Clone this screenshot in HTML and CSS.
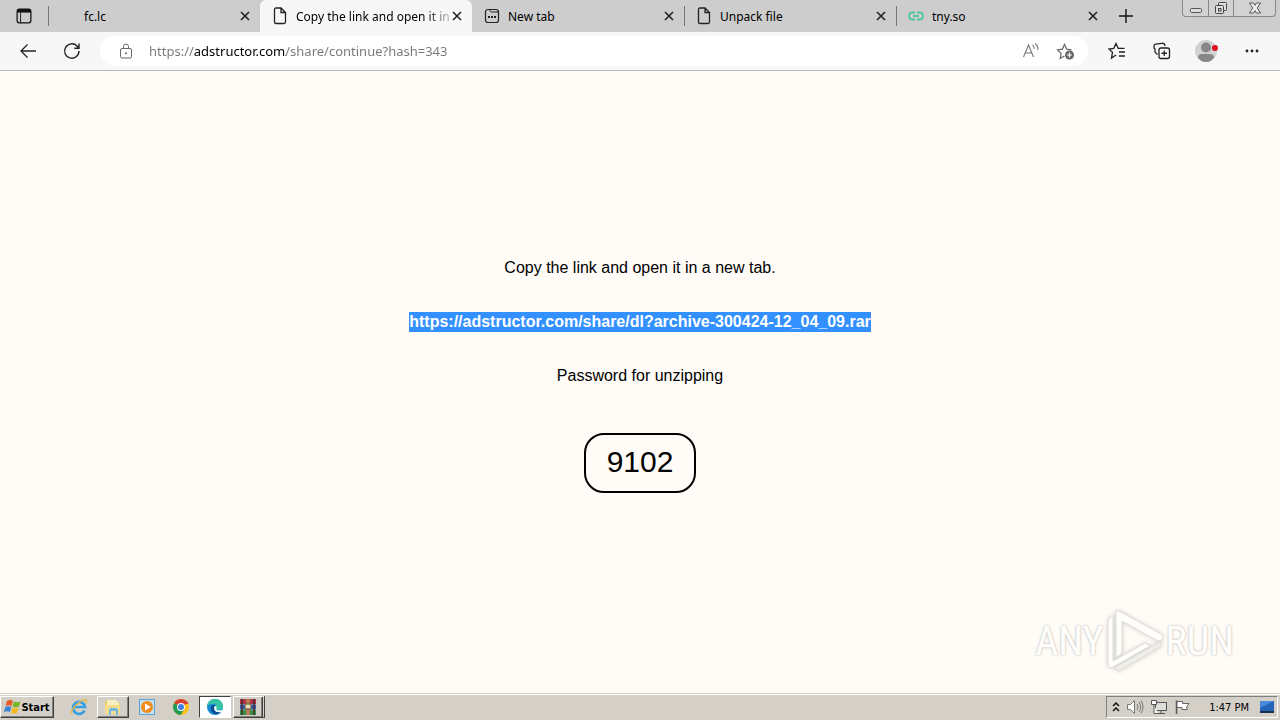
FILE: index.html
```html
<!DOCTYPE html>
<html lang="en">
<head>
<meta charset="utf-8">
<title>Copy the link and open it in a new tab</title>
<link rel="stylesheet" href="styles.css">
</head>
<body>
<svg class="defs" aria-hidden="true">
  <symbol id="close" viewBox="0 0 10 10"><path d="M1 1l8 8M9 1l-8 8" fill="none" stroke="#222" stroke-width="1.6"/></symbol>
  <symbol id="page" viewBox="0 0 14 18"><path d="M1.500 2.500q0-1.500 1.500-1.500h5l4.500 4.500v9.500q0 1.500-1.500 1.500h-8q-1.500 0-1.500-1.500zM8 1v4.500h4.500" fill="none" stroke="#222" stroke-width="1.300"/></symbol>
</svg>
<header class="tabbar">
  <button class="actions" aria-label="Tab actions"><svg width="16" height="16" viewBox="0 0 14 14"><rect x="1" y="1" width="12" height="12" rx="2" fill="none" stroke="#111" stroke-width="1.100"/><path d="M1 1h12v3H1z" fill="#111"/><path d="M4 4v9" stroke="#111" stroke-width=".8"/></svg></button>
  <nav class="tabs">
    <div class="tab"><span class="icon"></span><span class="title">fc.lc</span><button class="x" aria-label="Close fc.lc"><svg><use href="#close"/></svg></button></div>
    <div class="tab active"><svg class="icon"><use href="#page"/></svg><span class="title fade">Copy the link and open it in</span><button class="x" aria-label="Close page"><svg><use href="#close"/></svg></button></div>
    <div class="tab"><svg class="icon" viewBox="0 0 16 16"><rect x="1.500" y="1.500" width="13" height="13" rx="2.500" fill="none" stroke="#222" stroke-width="1.200"/><path d="M6 1.500v1q0 1.500 1.500 1.500h7" fill="none" stroke="#222"/><path d="M4 9h2M7 9h2M10 9h2" stroke="#222" stroke-width="2"/></svg><span class="title">New tab</span><button class="x" aria-label="Close New tab"><svg><use href="#close"/></svg></button></div>
    <div class="tab"><svg class="icon"><use href="#page"/></svg><span class="title">Unpack file</span><button class="x" aria-label="Close Unpack file"><svg><use href="#close"/></svg></button></div>
    <div class="tab"><svg class="icon" viewBox="0 0 16 16"><path d="M7 4.500H4.500a3.500 3.500 0 0 0 0 7H7M9 4.500h2.500a3.500 3.500 0 0 1 0 7H9M5 8h6" fill="none" stroke="#4fc6a0" stroke-width="2"/></svg><span class="title">tny.so</span><button class="x" aria-label="Close tny.so"><svg><use href="#close"/></svg></button></div>
  </nav>
  <button class="plus" aria-label="New tab"><svg width="14" height="14" viewBox="0 0 14 14"><path d="M7 0v14M0 7h14" stroke="#111" stroke-width="1.400"/></svg></button>
  <div class="window">
    <button aria-label="Minimize"><svg width="14" height="14" viewBox="0 0 14 14"><rect x="1.500" y="7.500" width="11" height="4" rx="1" fill="#ddd" stroke="#555"/></svg></button>
    <button aria-label="Restore"><svg width="14" height="14" viewBox="0 0 14 14"><rect x="4.500" y="1.500" width="8" height="8" rx="1" fill="#ddd" stroke="#444"/><rect x="1.500" y="4.500" width="8" height="8" rx="1" fill="#ddd" stroke="#444"/><rect x="4.500" y="7.500" width="2.500" height="2.500" fill="none" stroke="#444"/></svg></button>
    <button class="wide" aria-label="Close window"><svg width="14" height="14" viewBox="0 0 14 14"><path d="M1.500 2h4L7 4.300 8.500 2h4L9.300 7l3.200 5h-4L7 9.700 5.500 12h-4L4.700 7z" fill="#eee" stroke="#555"/></svg></button>
  </div>
</header>
<div class="toolbar">
  <button aria-label="Back"><svg width="18" height="16" viewBox="0 0 18 16"><path d="M17 8H2M8.500 1.500L2 8l6.500 6.500" fill="none" stroke="#222" stroke-width="1.300"/></svg></button>
  <button aria-label="Refresh"><svg width="18" height="18" viewBox="0 0 18 18"><path d="M16 9a7.200 7.200 0 1 1-2-5l2 2.200M16 1.500v4.700h-4.700" fill="none" stroke="#222" stroke-width="1.400"/></svg></button>
  <div class="address">
    <svg width="14" height="16" viewBox="0 0 14 16"><rect x="1.500" y="5.500" width="11" height="9.500" rx="1.500" fill="none" stroke="#666"/><path d="M4.500 5.500V3.500a2.500 2.500 0 0 1 5 0v2" fill="none" stroke="#666"/><circle cx="7" cy="10.200" r="1" fill="#666"/></svg>
    <input class="url" type="text" aria-label="Address" value="https://adstructor.com/share/continue?hash=343">
    <button aria-label="Read aloud"><svg width="18" height="18" viewBox="0 0 18 18"><path d="M1.500 15L6.500 3l5 12M3.200 11h6.600M10.500 3q2 1.500 1.700 4M13 1.500q3.500 2.500 2.700 6.500" fill="none" stroke="#777" stroke-width="1.100"/></svg></button>
    <button aria-label="Add to favorites"><svg width="20" height="18" viewBox="0 0 20 18"><path d="M8.500 14l-4.300 2.300.9-4.900L1.500 7.800l4.900-.7L8.500 2.500l2.200 4.600 4.800.7" fill="none" stroke="#666" stroke-width="1.200"/><circle cx="13.500" cy="13" r="4.500" fill="#666"/><path d="M11 13h5M13.500 10.500v5" stroke="#fff" stroke-width="1.200"/></svg></button>
  </div>
  <div class="tools">
    <button aria-label="Favorites"><svg width="18" height="18" viewBox="0 0 18 18"><path d="M8 13l-4.500 3 1-5.600L1 7l4.800-.7L8 1.500l2.200 4.800h6.300M11 10h6M11 14h6" fill="none" stroke="#222" stroke-width="1.300"/></svg></button>
    <button aria-label="Collections"><svg width="18" height="18" viewBox="0 0 18 18"><rect x="6" y="6" width="10.500" height="10.500" rx="2" fill="none" stroke="#222" stroke-width="1.300"/><path d="M11.250 8.500v5.500M8.500 11.250H14M4.500 12.500L2.800 11Q1.500 10 2 8V7L1 6V4q0-1.500 1.800-1.800L9 1.300q2-.3 2.600 1.200l.6 1.500" fill="none" stroke="#222" stroke-width="1.300"/></svg></button>
    <button aria-label="Profile"><svg width="24" height="24" viewBox="0 0 24 24"><circle cx="11" cy="12" r="11" fill="#cfd2cf"/><circle cx="11" cy="8.500" r="5" fill="#888"/><path d="M3 18.500q0-3.500 4-3.500h8q4 0 4 3.500-3 4.500-8 4.500t-8-4.500" fill="#888"/><circle cx="20" cy="9" r="3" fill="#df0f22"/></svg></button>
    <button aria-label="Settings and more"><svg width="16" height="4" viewBox="0 0 16 4"><g fill="#222"><circle cx="3" cy="2" r="1.400"/><circle cx="8" cy="2" r="1.400"/><circle cx="13" cy="2" r="1.400"/></g></svg></button>
  </div>
</div>
<main>
  <p>Copy the link and open it in a new tab.</p>
  <p><a href="#">https://adstructor.com/share/dl?archive-300424-12_04_09.rar</a></p>
  <p>Password for unzipping</p>
  <div class="code">9102</div>
  <div class="watermark">
    <span>ANY</span>
    <svg width="60" height="66" viewBox="0 0 60 66"><g fill="#fffefb" stroke="#deddd8" stroke-width="1" stroke-linejoin="round"><path d="M11 3q0-2 3-1l42 23q4 3 0 6l-3 1-36-20v32l-6 5z"/><path d="M3 12q0-3 5-5v45l32-18 5 3L8 58q-5 2-5-2z"/><path d="M10 58l45-25q3 3 0 5L16 61q-5 2-6-3z" fill="#eeede8"/></g></svg>
    <span>RUN</span>
  </div>
</main>
<footer class="taskbar">
  <button class="start"><svg width="17" height="16" viewBox="0 0 17 16"><path d="M3 2q3-2 6 0L7.500 7q-3-1.500-6 0z" fill="#e65a25"/><path d="M10 2.500q3 1.500 6.500 0L15 7.500q-3 1.500-6.500 0z" fill="#75b82a"/><path d="M1.200 8q3-1.500 6 0L6 13q-3-1.500-6 0z" fill="#3b83d6"/><path d="M8.300 8.500q3 1.500 6.300 0L13 14q-3 1.200-6 0z" fill="#f4b920"/></svg>Start</button>
  <div class="apps">
    <button aria-label="Internet Explorer"><svg width="18" height="18" viewBox="0 0 18 18"><path d="M14.500 12.500A6 6 0 1 1 15 9H5" fill="none" stroke="#3a9fe0" stroke-width="2.700"/><path d="M2 16C-1 13 9 3 14.500 1.700q3-.4 1.500 3.500" fill="none" stroke="#e8b93c" stroke-width="1.300"/></svg></button>
    <button class="raised" aria-label="Explorer"><svg width="18" height="18" viewBox="0 0 18 18"><path d="M1 3h6l1 2h8v11H1z" fill="#eccd68"/><path d="M3 2h9l3 3v6H3z" fill="#f7efbd"/><path d="M1 7h15v9H1z" fill="#f4dc88"/><path d="M5 17v-5q0-2 2-2h5q2 0 2 2v5h-2v-4H7v4z" fill="#6eb7e6"/></svg></button>
    <button aria-label="Media Player"><svg width="18" height="18" viewBox="0 0 18 18"><rect x="1.500" y="1.500" width="15" height="15" fill="#c4e0f1" stroke="#5aa4d4"/><circle cx="9" cy="9" r="6" fill="#f28b18"/><path d="M7 5.500l6 3.500-6 3.500z" fill="#fff"/></svg></button>
    <button aria-label="Chrome"><svg width="18" height="18" viewBox="0 0 18 18"><circle cx="9" cy="9" r="8" fill="#fbc116"/><path d="M9 9L2.070 5A8 8 0 0 1 15.930 5z" fill="#dc4032"/><path d="M9 9L2.070 5A8 8 0 0 0 8.500 17l4-6z" fill="#229b55"/><path d="M9 5h6.930" stroke="#dc4032" stroke-width="2"/><circle cx="9" cy="9" r="4" fill="#fff"/><circle cx="9" cy="9" r="3" fill="#3f7fdf"/></svg></button>
    <button class="pressed" aria-label="Edge"><svg width="18" height="18" viewBox="0 0 18 18"><circle cx="9" cy="9" r="8" fill="#168bd1"/><path d="M1 9Q2 1 9 1t8 7q0 4-5 4-3 0-2-2 1-5-4-4Q2 6 1 9" fill="#38c4a2"/><path d="M6 7q-3 5 1 8 4 3 8-1-5 1-7-2-1-3 1-5z" fill="#0c4c96"/><path d="M9 8q2 0 1.500 2-1 2 2 2.500l4.500-.5-1 2q-6 1-7.500-2Q7.500 9 9 8" fill="#fff"/></svg></button>
    <button class="raised stacked" aria-label="WinRAR"><svg width="18" height="18" viewBox="0 0 18 18"><path d="M1 1h16v5H1z" fill="#b23348"/><path d="M1 6.500h16v5H1z" fill="#3a61ae"/><path d="M1 12h16v5H1z" fill="#359047"/><path d="M3 1v16M15 1v16" stroke="#432830" stroke-width="1.500"/><path d="M7 1h4v16H7z" fill="#b8794c"/><path d="M6 6h6v5H6z" fill="#e9dca8" stroke="#555"/></svg></button>
  </div>
  <div class="tray">
    <svg width="8" height="12" viewBox="0 0 8 12"><path d="M1 5l3-3 3 3M1 10l3-3 3 3" fill="none" stroke="#111" stroke-width="1.500"/></svg>
    <svg width="18" height="16" viewBox="0 0 18 16"><path d="M1.500 5.500h3l4-4v13l-4-4h-3z" fill="#fff" stroke="#777"/><path d="M11 5q2 3 0 6M13 3q3.500 5 0 10M15 1.500q4 6.500 0 13" fill="none" stroke="#777"/></svg>
    <svg width="18" height="16" viewBox="0 0 18 16"><rect x="5.500" y="3.500" width="11" height="8" fill="#ddd" stroke="#555"/><path d="M8 14.500h7M11 12v2" stroke="#555"/><path d="M1.500 1.500h5v4h-5zM4 6v8.500h4" fill="#fff" stroke="#555"/></svg>
    <svg width="18" height="16" viewBox="0 0 18 16"><path d="M2.500 15V1.500" stroke="#555" stroke-width="1.500"/><path d="M3 2.500h5.500v2H15L12.500 8l1 2.500H8v-2H3z" fill="#fff" stroke="#666"/></svg>
    <time>1:47 PM</time>
    <svg width="16" height="16" viewBox="0 0 16 16"><path d="M1 2h14v10H1z" fill="#2563b8"/><path d="M1 2h14L1 9z" fill="#4a8add"/><path d="M1 12h14v2H1z" fill="#17304f"/></svg>
  </div>
</footer>
</body>
</html>
```
FILE: styles.css
```css
* { box-sizing: border-box; }
body { margin: 0; min-height: 100vh; display: flex; flex-direction: column; background: #fffcf7; font-family: "Liberation Sans", Arial, sans-serif; color: #000; }
button { display: flex; align-items: center; justify-content: center; flex: none; border: 0; padding: 0; background: none; color: #000; font: inherit; }
svg { flex: none; display: block; }
.defs { position: absolute; width: 0; height: 0; }

.tabbar { display: flex; height: 32px; background: #cdcdcd; font-family: "Noto Sans", sans-serif; font-size: 12px; }
.actions { width: 48px; }
.tabs { display: flex; flex: 0 1 1060px; min-width: 0; }
.tab { flex: 1; min-width: 0; display: flex; align-items: center; padding: 0 10px 0 12px; background: linear-gradient(#777, #777) left 6px / 1px 20px no-repeat; }
.tab.active { background: #f7f7f7; border-radius: 6px 6px 0 0; }
.tab.active + .tab { background: none; }
.icon { width: 16px; height: 18px; margin-right: 8px; flex: none; }
.title { flex: 1; min-width: 0; overflow: hidden; white-space: nowrap; }
.title.fade { background: linear-gradient(90deg, #000 130px, #aaa 150px); -webkit-background-clip: text; background-clip: text; color: transparent; overflow: visible; }
.x { width: 10px; height: 32px; margin-left: 2px; }
.x svg { width: 10px; height: 10px; }
.plus { width: 36px; }
.window { display: flex; height: 17px; margin-left: auto; margin-right: 4px; border: 1px solid #888; border-top: 0; border-radius: 0 0 4px 4px; background: #d2d2d2; }
.window button { width: 25px; }
.window button + button { border-left: 1px solid #888; }
.window .wide { width: 42px; }

.toolbar { display: flex; align-items: center; height: 39px; padding: 0 6px; background: #f7f7f7; border-bottom: 1px solid #b8b8bc; }
.toolbar > button { width: 44px; height: 32px; }
.address { flex: 1; min-width: 0; height: 30px; display: flex; align-items: center; gap: 16px; margin-left: 6px; padding: 0 12px 0 19px; background: #fff; border-radius: 15px; }
.url { flex: 1; min-width: 0; height: 24px; border: 0; padding: 0; outline: 0; font: 13px "Noto Sans", sans-serif; color: transparent; background: linear-gradient(90deg, #777 45px, #000 45px, #000 137px, #777 137px); -webkit-background-clip: text; background-clip: text; }
.tools { display: flex; align-items: center; margin-left: 6px; }
.tools button { width: 45px; height: 32px; }

main { position: relative; flex: 1; display: flex; flex-direction: column; align-items: center; justify-content: center; gap: 34px; padding-bottom: 14px; font-size: 16px; line-height: 20px; }
p { margin: 0; }
a { display: block; background: #3390ff; color: #fff; font-weight: bold; text-decoration: none; }
.code { margin-top: 13px; padding: 9px 21px 11px; border: 2px solid #000; border-radius: 20px; font-size: 30px; line-height: 36px; }
.watermark { position: absolute; right: 46px; bottom: 18px; display: flex; align-items: center; gap: 1px; font-family: "Roboto Condensed", "Liberation Sans Narrow", "Liberation Sans", sans-serif; font-size: 40px; line-height: 66px; color: #fffefb; text-shadow: 0 0 2px #c4c3bf, 0 0 3px #d4d3cf; }
.watermark svg { filter: drop-shadow(0 0 2px #d0cfca); }

.taskbar { display: flex; align-items: center; height: 27px; padding: 1px 2px 1px 0; background: #d4d0c8; border-top: 1px solid #d4d0c8; box-shadow: inset 0 1px #fff; font-family: "DejaVu Sans Condensed", "DejaVu Sans", sans-serif; font-size: 11px; }
.start, .raised { border: 1px solid; border-color: #fff #404040 #404040 #fff; box-shadow: inset -1px -1px #808080; }
.start { width: 54px; height: 22px; font-weight: bold; }
.apps { display: flex; gap: 2px; margin-left: 9px; }
.apps button { width: 32px; height: 22px; }
.apps .pressed { background: #fff; border: 1px solid; border-color: #404040 #fff #fff #404040; }
.apps .stacked { width: 32px; border-right: 3px double #404040; }
.tray { margin-left: auto; height: 22px; display: flex; align-items: center; gap: 6px; padding: 0 2px 0 5px; border: 1px solid; border-color: #808080 #fff #fff #808080; }
.tray time { margin: 0 4px 0 11px; white-space: nowrap; }
```
